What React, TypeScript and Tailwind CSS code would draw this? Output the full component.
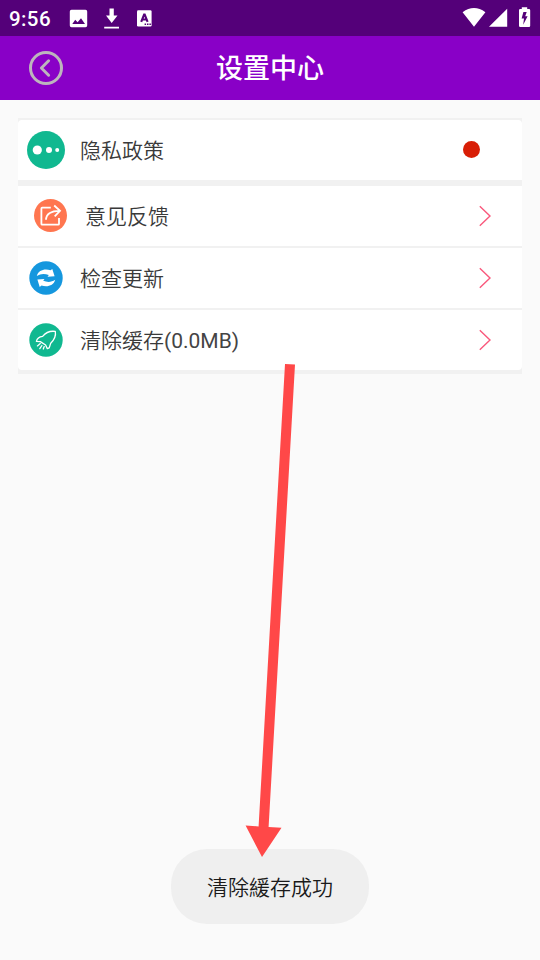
import React from "react";

function StatusBar() {
  return (
    <div className="flex h-9 items-center bg-[#540079] text-white">
      <span className="ml-[9px] w-[43px] whitespace-nowrap font-['Roboto'] text-[20.5px] font-medium leading-9 tracking-[0.4px] pt-[2px]">9:56</span>
      <svg className="ml-[17px] h-9 w-[19px]" viewBox="69 0 19 36">
        <path fillRule="evenodd" fill="#fff" d="M71.500 9.700H85.500Q87.200 9.700 87.200 11.400V25.600Q87.200 27.300 85.500 27.300H71.500Q69.800 27.300 69.800 25.600V11.400Q69.800 9.700 71.500 9.700ZM72.300 24H85L81 18.300L77.600 22.300L75.200 19.700Z" />
      </svg>
      <svg className="ml-[15px] h-9 w-[17px]" viewBox="103 0 17 36">
        <path fill="#fff" d="M109.500 8.600H113.800V15.600H117.500L111.700 22.900L106 15.600H109.500ZM104.200 26.700H119V28.600H104.200Z" />
      </svg>
      <svg className="ml-[16px] h-9 w-[18px]" viewBox="136 0 18 36">
        <rect x="137" y="10.200" width="14.600" height="16.300" rx="1.300" fill="#fff" />
        <path fill="none" stroke="#540079" strokeWidth="2.100" d="M141.200 21.900L144.100 14.600H144.700L147.600 21.900M142.300 19.500H146.500" />
        <path fill="#540079" d="M144.600 23.500h1.500v1.500h-1.500zM147 23.500h1.500v1.500h-1.500zM149.400 23.500h1.500v1.500h-1.500z" />
      </svg>
      <svg className="ml-auto mr-2 h-9 w-[72px]" viewBox="460 0 72 36">
        <path fill="#fff" d="M462.600 12.200Q474 4 485.400 12.200L474 26.800ZM489 26.800L507.200 8.700V26.800Z" />
        <path fillRule="evenodd" fill="#fff" d="M521.800 7.200H527.200V9H529Q530.200 9 530.200 10.200V25.800Q530.200 27 529 27H520.200Q519 27 519 25.800V10.200Q519 9 520.200 9H521.800ZM523.400 12L521.600 18.600H524L523.200 24.700L527.600 16.200H525.200L526.700 12Z" />
      </svg>
    </div>
  );
}

function Header() {
  return (
    <header className="relative flex h-16 items-center justify-center bg-[#8900c7]">
      <svg className="absolute left-7 top-[14px] size-9" viewBox="0 0 36 36" fill="none" stroke="#bdb5bd">
        <circle cx="18" cy="18" r="15.500" strokeWidth="3" />
        <path d="M20.600 10.800L13.400 18L20.600 25.200" strokeWidth="3" strokeLinecap="round" strokeLinejoin="round" />
      </svg>
      <h1 className="mb-[2px] font-['Noto_Sans_CJK_SC',sans-serif] text-[27px] font-medium leading-[60px] text-white">设置中心</h1>
    </header>
  );
}

function DotsIcon() {
  return (
    <svg className="ml-[9px] size-[38px]" viewBox="0 0 38 38">
      <circle cx="19" cy="19" r="19" fill="#10b890" />
      <g fill="#fff">
        <circle cx="10.300" cy="19" r="4.600" />
        <circle cx="22" cy="19" r="3" />
        <circle cx="30.200" cy="19" r="2" />
      </g>
    </svg>
  );
}

function ShareIcon() {
  return (
    <svg className="ml-4 mb-[2px] size-[33px]" viewBox="0 0 33 33" fill="none" stroke="#fff" strokeWidth="1.800">
      <circle cx="16.500" cy="16.500" r="16.500" fill="#ff7650" stroke="none" />
      <path d="M16.800 8.700H8.200Q7.400 8.700 7.400 9.500V24.900Q7.400 25.700 8.200 25.700H24.200Q25 25.700 25 24.900V19" />
      <path d="M12 20.800Q12.300 11.800 26 11.800M20.200 6.500L26 11.800L20.700 17.300" />
    </svg>
  );
}

function RefreshIcon() {
  return (
    <svg className="ml-[11px] size-[34px]" viewBox="0 0 34 34">
      <circle cx="17" cy="17" r="16.700" fill="#1597de" />
      <path fill="#fff" d="M7.800 15C9.300 9 16 7.300 21.500 9.300L23.300 7.900L25.600 15.300L18.500 15.800L19.800 14C15.500 12.300 11.500 12.500 7.800 15Z" />
      <path fill="#fff" d="M26.200 18.800C24.700 24.800 18 26.500 12.500 24.500L10.700 25.900L8.400 18.500L15.500 18L14.200 19.800C18.500 21.500 22.500 21.300 26.200 18.800Z" />
    </svg>
  );
}

function RocketIcon() {
  return (
    <svg className="ml-[11px] size-[34px]" viewBox="0 0 34 34" fill="none" stroke="#fff" strokeWidth="1.300" strokeLinecap="round" strokeLinejoin="round">
      <circle cx="17" cy="17" r="16.700" fill="#10b890" stroke="none" />
      <path d="M13.600 13.400C17.500 8.600 21.500 7.700 26.300 8.400C27.200 13.300 25.200 16.900 21.700 20.200L20.200 24.900L18.300 25.700L16.600 22L11.300 18.600L7.400 18.300C8 15.700 10.500 13.800 13.600 13.400Z" />
      <path d="M11.300 20.600L8.400 22.900M12.900 22.500L10.800 25.600M15.200 23.600L14.300 26" />
    </svg>
  );
}

function Chevron() {
  return (
    <svg className="ml-auto mr-[30px] h-[22px] w-[14px]" viewBox="0 0 14 22" fill="none" stroke="#f9587c" strokeWidth="1.400">
      <path d="M1.800 1.200L12 11L1.800 20.800" />
    </svg>
  );
}

function Label({ className, children }: { className: string; children: React.ReactNode }) {
  return (
    <span className={`pt-[2px] font-['Roboto','Noto_Sans_CJK_SC',sans-serif] text-[21px] font-[350] leading-[30px] text-[#3a3a3a] ${className}`}>
      {children}
    </span>
  );
}

export default function App() {
  return (
    <div className="relative h-[960px] w-[540px] overflow-hidden bg-[#fafafa]">
      <StatusBar />
      <Header />
      <main className="mx-[18px] mt-[18px] bg-[#f1f1f1] pb-1 pt-[2px]">
        <div className="mb-[6px] flex h-[60px] items-center rounded-t bg-white">
          <DotsIcon />
          <Label className="ml-[15px]">隐私政策</Label>
          <span className="mb-px ml-auto mr-[42px] size-[17.5px] rounded-full bg-[#d81e06]" />
        </div>
        <div className="flex flex-col gap-[2px]">
          <div className="flex h-[60px] items-center bg-white">
            <ShareIcon />
            <Label className="ml-[18px]">意见反馈</Label>
            <Chevron />
          </div>
          <div className="flex h-[60px] items-center bg-white">
            <RefreshIcon />
            <Label className="ml-[17px]">检查更新</Label>
            <Chevron />
          </div>
          <div className="flex h-[60px] items-center rounded-b bg-white">
            <RocketIcon />
            <Label className="ml-[17px]">清除缓存<span className="font-normal text-[#444]">(0.0MB)</span></Label>
            <Chevron />
          </div>
        </div>
      </main>
      <div className="absolute left-[171px] top-[849px] flex h-[75px] w-[198px] items-center justify-center rounded-[36px] bg-[#efefef]">
        <span className="mb-[2px] font-['Noto_Sans_CJK_SC',sans-serif] text-[21px] font-[350] leading-[30px] text-[#1a1a1a]">清除緩存成功</span>
      </div>
      <svg className="pointer-events-none absolute left-[240px] top-[360px] h-[500px] w-[60px]" viewBox="240 360 60 500">
        <path fill="#ff4848" d="M285 364L295 364.500L268.600 827L281.500 827.800L262 857L245.600 825.600L258.600 826.400Z" />
      </svg>
    </div>
  );
}
